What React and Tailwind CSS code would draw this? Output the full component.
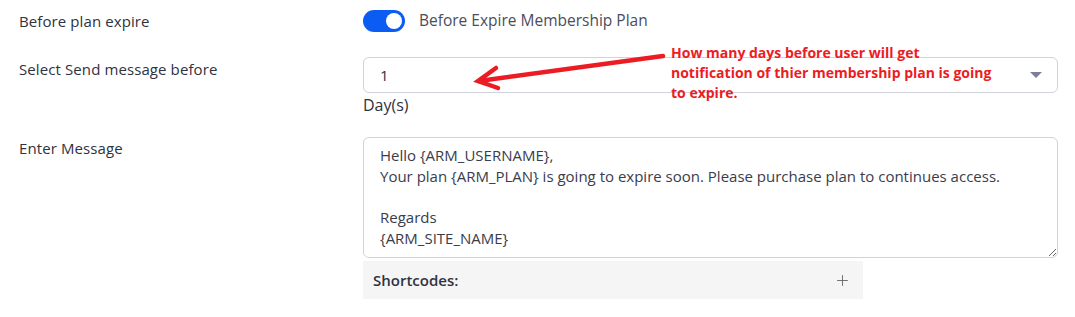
import React from 'react';
import { Plus } from 'lucide-react';

const message = `Hello {ARM_USERNAME},
Your plan {ARM_PLAN} is going to expire soon. Please purchase plan to continues access.

Regards
{ARM_SITE_NAME}`;

const App = () => {
  return (
    <div className="relative w-[1075px] h-[317px] bg-white text-[#2f3241]" style={{ fontFamily: '"Open Sans", "Noto Sans", sans-serif' }}>
      <div className="pl-[19px] pt-[10px]">
        {/* Row: toggle */}
        <div className="flex items-center h-[22px]">
          <div className="w-[344px] text-[15px] font-medium tracking-[0.1px]">Before plan expire</div>
          <div className="flex items-center">
            <div className="w-[42px] h-[22px] rounded-full bg-[#0b5cf2] flex items-center justify-end pr-[3px]">
              <div className="w-[16px] h-[16px] rounded-full bg-white"></div>
            </div>
            <span className="ml-[14px] text-[15.5px] text-[#4b4d5c]">Before Expire Membership Plan</span>
          </div>
        </div>

        {/* Row: select */}
        <div className="flex mt-[25px]">
          <div className="w-[344px] text-[15px] font-medium tracking-[0.1px] pt-[1px]">Select Send message before</div>
          <div className="w-[695px]">
            <div className="h-[36px] border border-[#d0d3dc] rounded-[6px] flex items-center justify-between pl-[16px] pr-[15px]">
              <span className="text-[15px] text-[#2f3241]">1</span>
              <div className="w-0 h-0 border-l-[6px] border-r-[6px] border-t-[6px] border-l-transparent border-r-transparent border-t-[#7d7f98]"></div>
            </div>
            <div className="text-[16px] leading-[22px] text-[#2f3241] mt-[1px]">Day(s)</div>
          </div>
        </div>

        {/* Row: message */}
        <div className="flex mt-[21px]">
          <div className="w-[344px] text-[15px] font-medium tracking-[0.1px]">Enter Message</div>
          <div className="w-[695px]">
            <textarea
              readOnly
              defaultValue={message}
              className="block w-full h-[121px] border border-[#d0d3dc] rounded-[6px] pl-[16px] pr-[16px] pt-[7px] text-[15px] leading-[20.7px] text-[#3a3c4c] outline-none resize-y"
              style={{ fontFamily: '"Open Sans", "Noto Sans", sans-serif' }}
            />
            <div className="mt-[3px] w-[500px] h-[38px] bg-[#f6f5f6] flex items-center justify-between pl-[10px] pr-[12px]">
              <span className="text-[15px] font-semibold text-[#2f3241]">Shortcodes:</span>
              <Plus className="w-[17px] h-[17px] text-[#666]" strokeWidth={1.3} />
            </div>
          </div>
        </div>
      </div>

      {/* Annotation */}
      <svg className="absolute left-0 top-0 pointer-events-none" width="1075" height="317">
        <g stroke="#ec1c24" strokeWidth="4.5" strokeLinecap="round" fill="none">
          <path d="M663 56 L479 81" />
          <path d="M496 68 L478 81 L498 88" />
        </g>
      </svg>
      <div className="absolute left-[671px] top-[43px] w-[322px] text-[14px] leading-[20px] font-bold text-[#ec1c24]">
        How many days before user will get notification of thier membership plan is going to expire.
      </div>
    </div>
  );
};

export default App;
